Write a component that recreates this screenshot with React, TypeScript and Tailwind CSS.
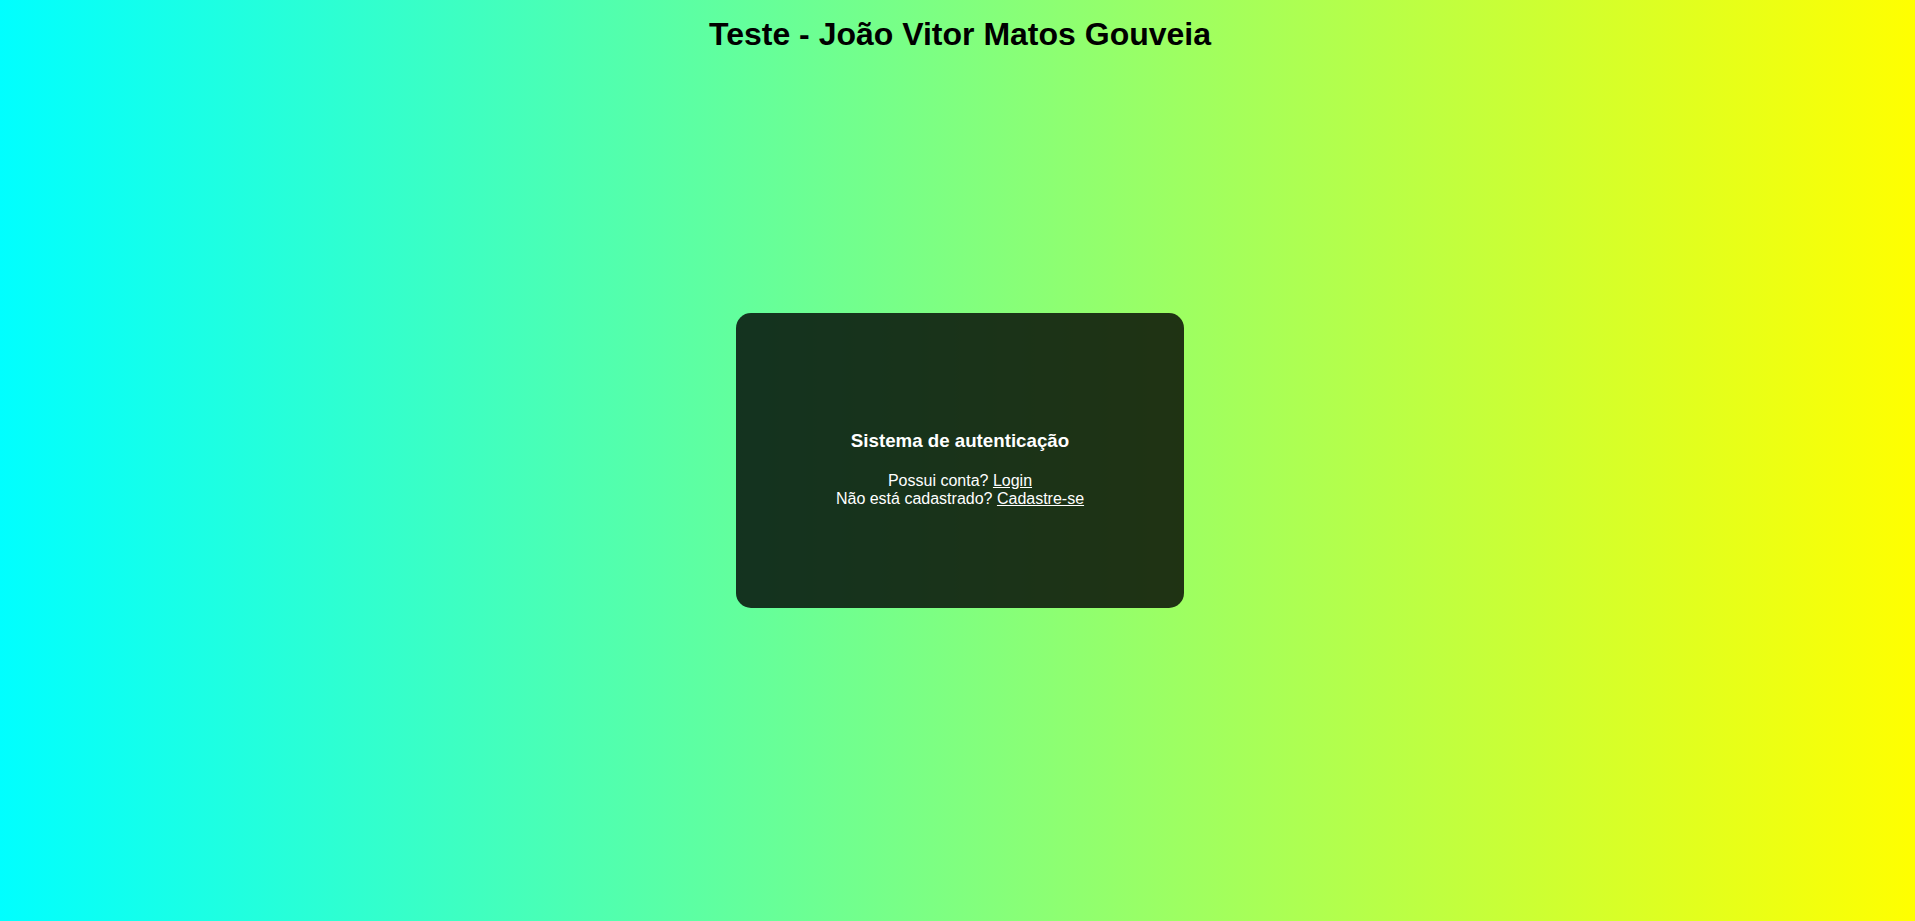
export default function App() {
  return (
    <div
      className="grid h-[921px] grid-rows-[1fr_auto_1fr] bg-[linear-gradient(to_right,#00ffff,#ffff00)] text-black"
      style={{ fontFamily: '"Liberation Sans", Arial, sans-serif' }}
    >
      {/* Header */}
      <div className="flex justify-center self-start pl-[5px] pt-[16px]">
        <h1 className="text-[32px] font-bold leading-[37px]">Teste - João Vitor Matos Gouveia</h1>
      </div>

      {/* Auth card */}
      <div className="flex justify-center pl-[5px]">
        <div className="h-[295px] w-[448px] rounded-[15px] bg-black/80 pt-[117px] text-center text-white">
          <h3 className="text-[18.72px] font-bold leading-[21.5px]">Sistema de autenticação</h3>
          <p className="mt-[20px] text-[16px] leading-[18.4px]">
            Possui conta?{' '}
            <a href="#" className="underline">
              Login
            </a>
            <br />
            Não está cadastrado?{' '}
            <a href="#" className="underline">
              Cadastre-se
            </a>
          </p>
        </div>
      </div>

      <div />
    </div>
  );
}
